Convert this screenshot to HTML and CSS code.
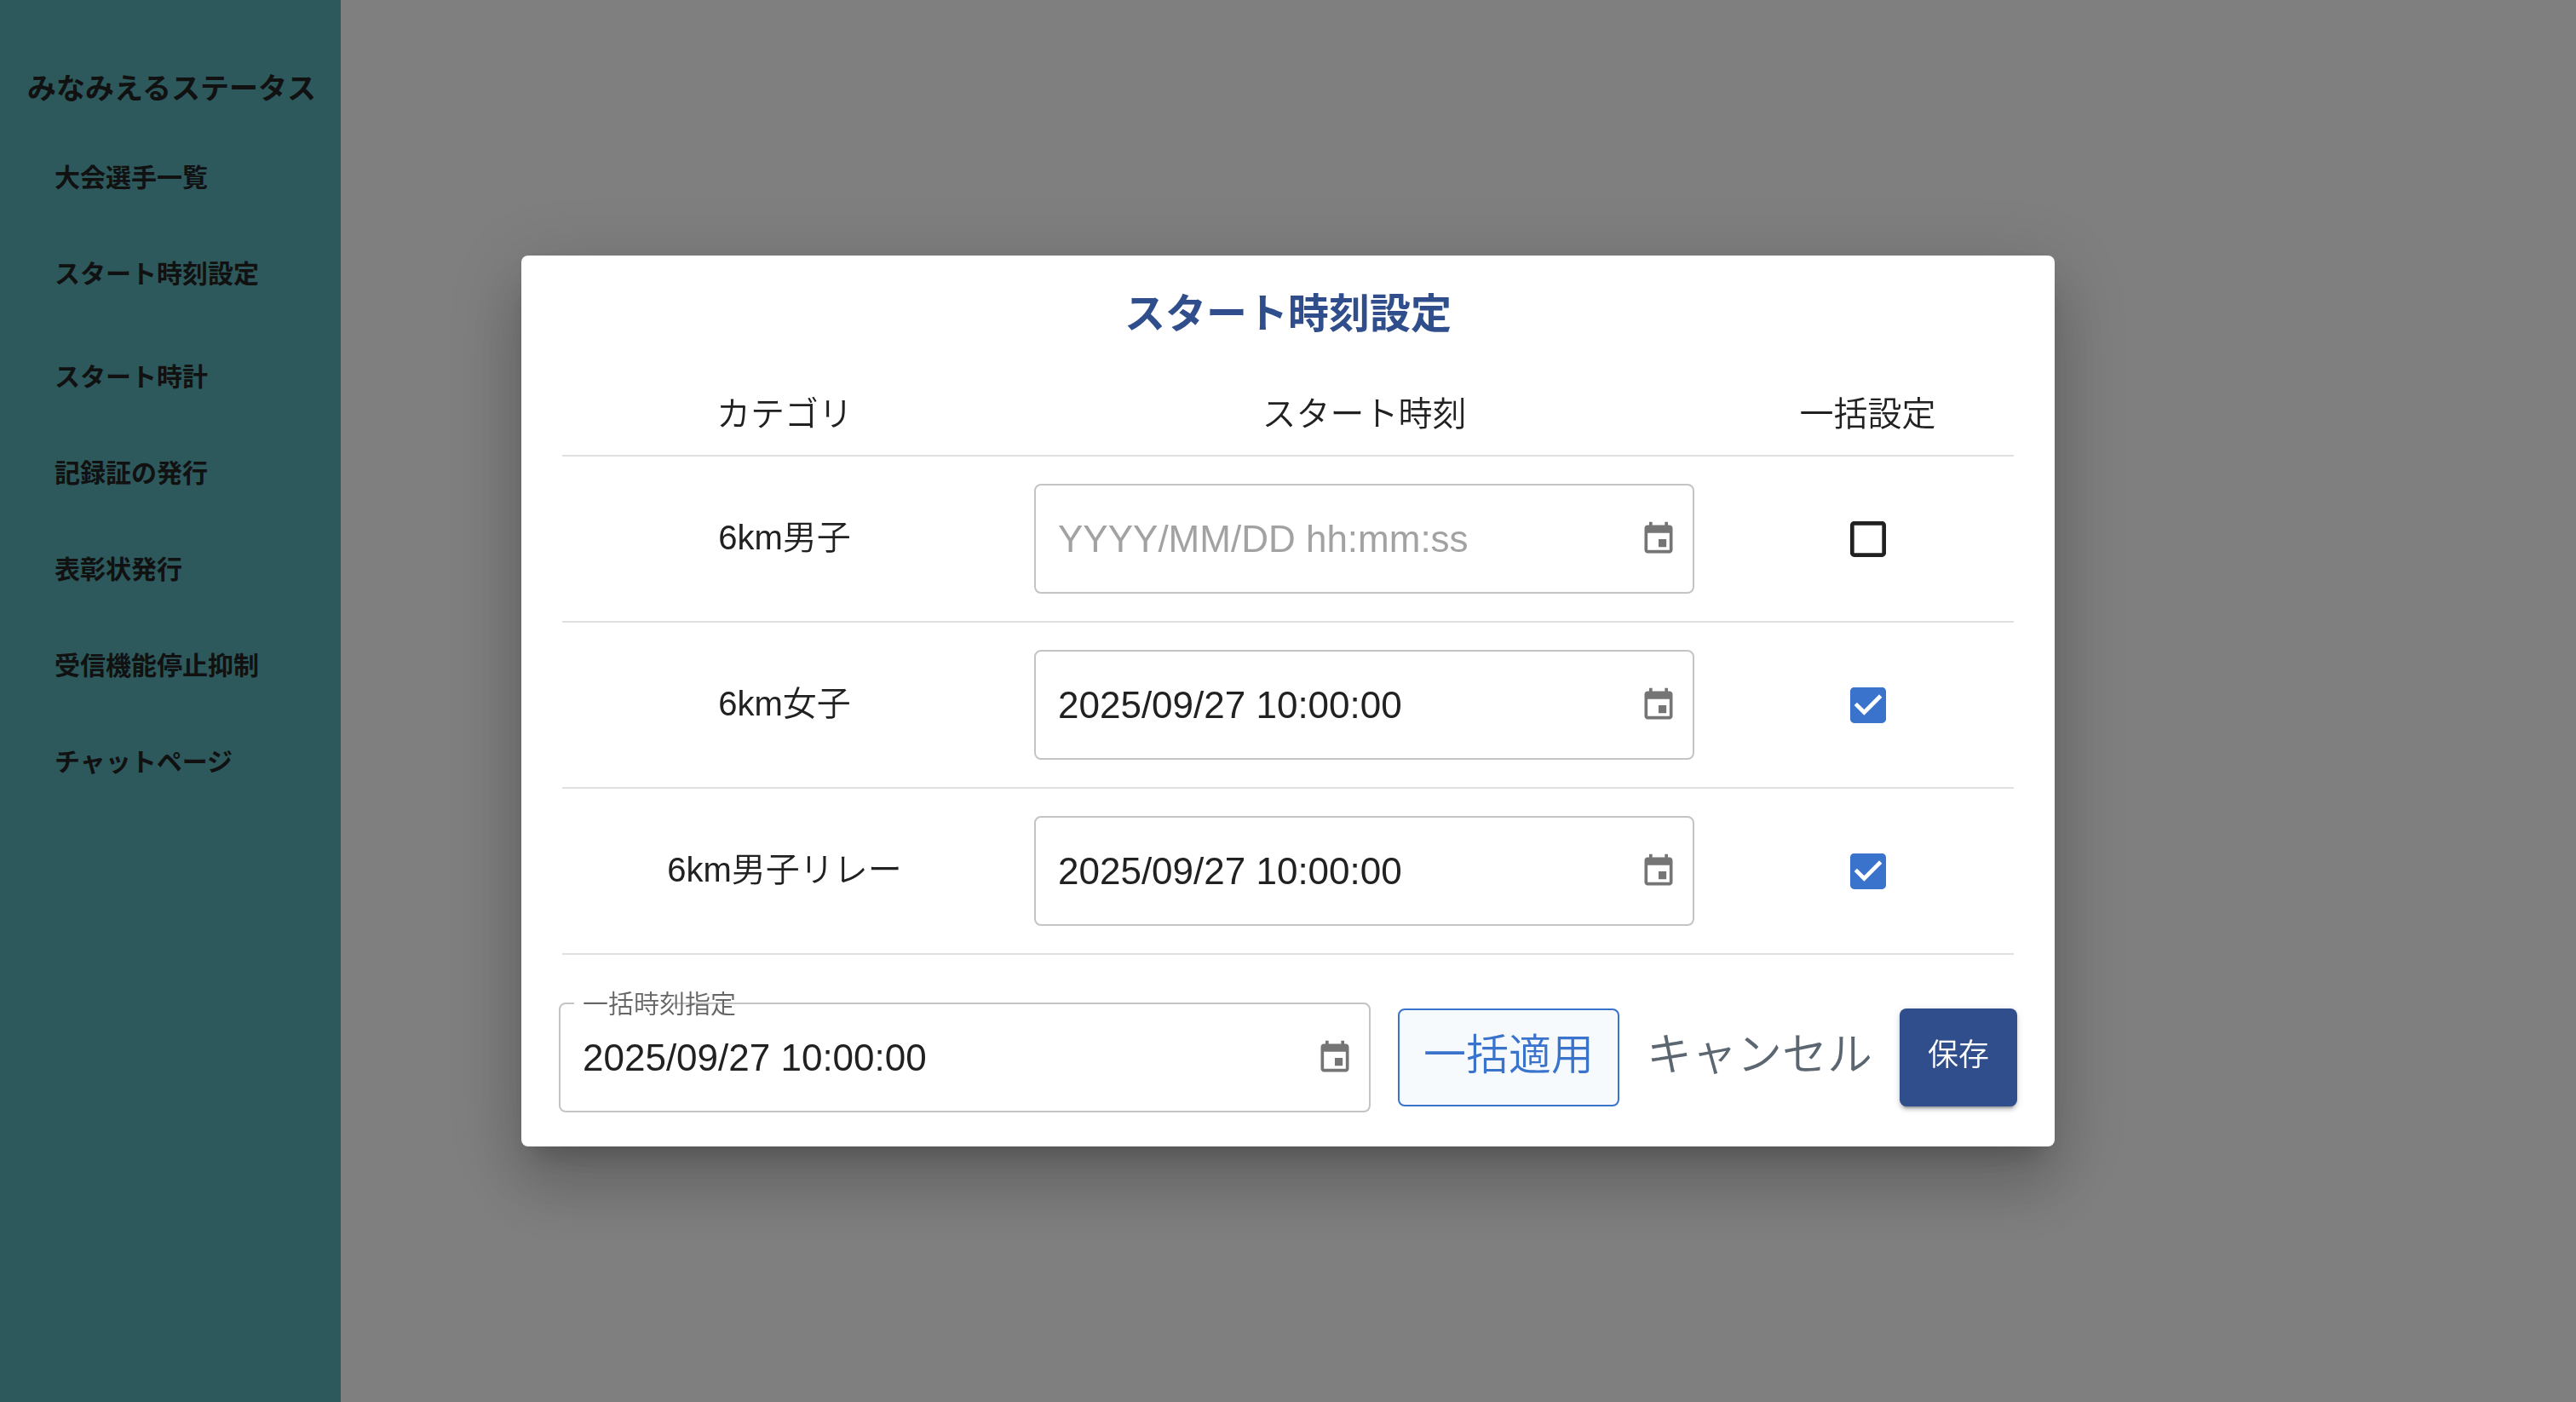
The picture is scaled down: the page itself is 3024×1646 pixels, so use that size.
FILE: index.html
```html
<!DOCTYPE html>
<html lang="ja">
<head>
<meta charset="utf-8">
<meta name="viewport" content="width=device-width, initial-scale=1">
<title>スタート時刻設定</title>
<link rel="stylesheet" href="styles.css">
</head>
<body>
<svg class="sprite" aria-hidden="true">
  <symbol id="calendar" viewBox="0 0 24 24"><path d="M17 12h-5v5h5v-5zM16 1v2H8V1H6v2H5c-1.11 0-1.99.9-1.99 2L3 19c0 1.1.89 2 2 2h14c1.1 0 2-.9 2-2V5c0-1.1-.9-2-2-2h-1V1h-2zm3 18H5V8h14v11z"/></symbol>
</svg>
<div class="app">
  <nav class="sidebar">
    <h1 class="brand">みなみえるステータス</h1>
    <ul class="menu">
      <li><a href="#athletes">大会選手一覧</a></li>
      <li class="menu-group-end"><a href="#start-time">スタート時刻設定</a></li>
      <li><a href="#clock">スタート時計</a></li>
      <li><a href="#records">記録証の発行</a></li>
      <li><a href="#awards">表彰状発行</a></li>
      <li><a href="#receive">受信機能停止抑制</a></li>
      <li><a href="#chat">チャットページ</a></li>
    </ul>
  </nav>
  <main class="content"></main>
</div>
<div class="backdrop">
  <form class="dialog" role="dialog" aria-modal="true" aria-labelledby="dialog-title">
    <h2 class="dialog-title" id="dialog-title">スタート時刻設定</h2>
    <div class="table-wrap">
      <table class="times">
        <colgroup><col class="col-category"><col><col class="col-bulk"></colgroup>
        <thead>
          <tr><th scope="col">カテゴリ</th><th scope="col">スタート時刻</th><th scope="col">一括設定</th></tr>
        </thead>
        <tbody>
          <tr>
            <td><label class="category" for="time-1">6km男子</label></td>
            <td><div class="field"><input class="field-input" id="time-1" type="text" placeholder="YYYY/MM/DD hh:mm:ss"><button class="picker" type="button" aria-label="日時を選択"><svg class="icon"><use href="#calendar"/></svg></button></div></td>
            <td><input class="check" type="checkbox" aria-label="6km男子 一括設定"></td>
          </tr>
          <tr>
            <td><label class="category" for="time-2">6km女子</label></td>
            <td><div class="field"><input class="field-input" id="time-2" type="text" value="2025/09/27 10:00:00"><button class="picker" type="button" aria-label="日時を選択"><svg class="icon"><use href="#calendar"/></svg></button></div></td>
            <td><input class="check" type="checkbox" aria-label="6km女子 一括設定" checked></td>
          </tr>
          <tr>
            <td><label class="category" for="time-3">6km男子リレー</label></td>
            <td><div class="field"><input class="field-input" id="time-3" type="text" value="2025/09/27 10:00:00"><button class="picker" type="button" aria-label="日時を選択"><svg class="icon"><use href="#calendar"/></svg></button></div></td>
            <td><input class="check" type="checkbox" aria-label="6km男子リレー 一括設定" checked></td>
          </tr>
        </tbody>
      </table>
    </div>
    <div class="actions">
      <div class="field field-bulk">
        <label class="field-label" for="bulk-time">一括時刻指定</label>
        <input class="field-input" id="bulk-time" type="text" value="2025/09/27 10:00:00">
        <button class="picker" type="button" aria-label="日時を選択"><svg class="icon"><use href="#calendar"/></svg></button>
      </div>
      <button class="button button-outlined" type="button">一括適用</button>
      <button class="button button-text" type="button">キャンセル</button>
      <button class="button button-filled" type="submit">保存</button>
    </div>
  </form>
</div>
</body>
</html>
```
FILE: styles.css
```css
* {
  box-sizing: border-box;
}

body {
  margin: 0;
  background: #fff;
  color: #212121;
  font-family: "Liberation Sans", "Noto Sans CJK JP", sans-serif;
  font-size: 40px;
  font-weight: 350;
}

button,
input {
  font: inherit;
  color: inherit;
}

.sprite {
  display: none;
}

.app {
  display: flex;
  min-height: 100vh;
}

/* Sidebar */
.sidebar {
  flex: 0 0 400px;
  padding: 76px 0 32px;
  background: #5ab2ba;
  color: #222;
}

.brand {
  margin: 0;
  padding: 0 24px 0 32px;
  font-size: 34px;
  font-weight: 700;
  line-height: 56px;
  white-space: nowrap;
}

.menu {
  display: flex;
  flex-direction: column;
  margin: 0;
  padding: 20px 0 0;
  list-style: none;
}

.menu a {
  display: block;
  padding: 0 64px;
  color: inherit;
  font-size: 30px;
  font-weight: 700;
  line-height: 113px;
  text-decoration: none;
  white-space: nowrap;
}

.menu-group-end {
  margin-bottom: 8px;
}

.content {
  flex: 1;
}

/* Dialog */
.backdrop {
  position: fixed;
  inset: 0;
  display: flex;
  align-items: center;
  justify-content: center;
  padding: 64px;
  background: rgba(0, 0, 0, 0.5);
}

.dialog {
  width: 100%;
  max-width: 1800px;
  border-radius: 8px;
  background: #fff;
  box-shadow:
    0 22px 30px -14px rgba(0, 0, 0, 0.2),
    0 48px 76px 6px rgba(0, 0, 0, 0.14),
    0 18px 92px 16px rgba(0, 0, 0, 0.12);
}

.dialog-title {
  margin: 0;
  padding: 33px 48px;
  color: #2f4e8b;
  font-size: 48px;
  font-weight: 700;
  line-height: 72px;
  text-align: center;
}

.table-wrap {
  padding: 0 48px;
}

.times {
  width: 100%;
  border-collapse: separate;
  border-spacing: 0;
  table-layout: fixed;
}

.col-category {
  width: 522px;
}

.col-bulk {
  width: 343px;
}

.times th,
.times td {
  padding: 32px;
  border-bottom: 2px solid #e0e0e0;
  text-align: center;
  vertical-align: middle;
}

.times th {
  padding: 20px 32px;
  font-weight: 350;
  line-height: 56px;
}

.category {
  display: block;
  padding-bottom: 4px;
  line-height: 56px;
}

/* Date fields */
.field {
  position: relative;
  display: flex;
  align-items: center;
  height: 129px;
  padding: 0 18px 0 26px;
  border: 2px solid #c4c4c4;
  border-radius: 8px;
}

.field-input {
  flex: 1;
  min-width: 0;
  height: 100%;
  padding: 0;
  border: 0;
  outline: 0;
  background: none;
  font-size: 44px;
  font-weight: 400;
}

.field-input::placeholder {
  color: #a2a2a2;
  opacity: 1;
}

.picker {
  display: flex;
  padding: 0;
  border: 0;
  background: none;
  color: #757575;
}

.icon {
  width: 44px;
  height: 44px;
  fill: currentColor;
}

.field-label {
  position: absolute;
  top: -20px;
  left: 26px;
  color: #666;
  font-size: 30px;
  line-height: 40px;
}

/* Opening in the outline behind the start of the floating label */
.field-bulk::before {
  content: "";
  position: absolute;
  top: -2px;
  left: 16px;
  width: 114px;
  height: 2px;
  background: #fff;
}

.check {
  display: block;
  width: 56px;
  height: 56px;
  margin: 0 auto;
  appearance: none;
  background: url("data:image/svg+xml,%3Csvg xmlns='http://www.w3.org/2000/svg' viewBox='0 0 24 24'%3E%3Cpath fill='%23212121' d='M19 5v14H5V5h14m0-2H5c-1.1 0-2 .9-2 2v14c0 1.1.9 2 2 2h14c1.1 0 2-.9 2-2V5c0-1.1-.9-2-2-2z'/%3E%3C/svg%3E") center / contain no-repeat;
}

.check:checked {
  background-image: url("data:image/svg+xml,%3Csvg xmlns='http://www.w3.org/2000/svg' viewBox='0 0 24 24'%3E%3Cpath fill='%233973cc' d='M19 3H5c-1.11 0-2 .9-2 2v14c0 1.1.89 2 2 2h14c1.11 0 2-.9 2-2V5c0-1.1-.89-2-2-2zm-9 14l-5-5 1.41-1.41L10 14.17l7.59-7.59L19 8l-9 9z'/%3E%3C/svg%3E");
}

/* Footer */
.actions {
  display: flex;
  align-items: center;
  gap: 32px;
  padding: 56px 44px 40px;
}

.field-bulk {
  flex: 1;
}

.button {
  height: 115px;
  padding: 0 33px 6px;
  border: 0;
  border-radius: 8px;
  background: none;
  font-size: 50px;
  line-height: 56px;
  white-space: nowrap;
}

.button-outlined {
  padding: 0 28px 6px;
  border: 2px solid #3973cc;
  background: #f6fafd;
  color: #3973cc;
}

.button-text {
  padding: 0 0 6px;
  color: #5b6670;
  font-size: 53px;
}

.button-filled {
  background: #2f4e8b;
  box-shadow:
    0 6px 2px -4px rgba(0, 0, 0, 0.2),
    0 4px 4px rgba(0, 0, 0, 0.14),
    0 2px 10px rgba(0, 0, 0, 0.12);
  color: #fff;
  font-size: 36px;
}
```
